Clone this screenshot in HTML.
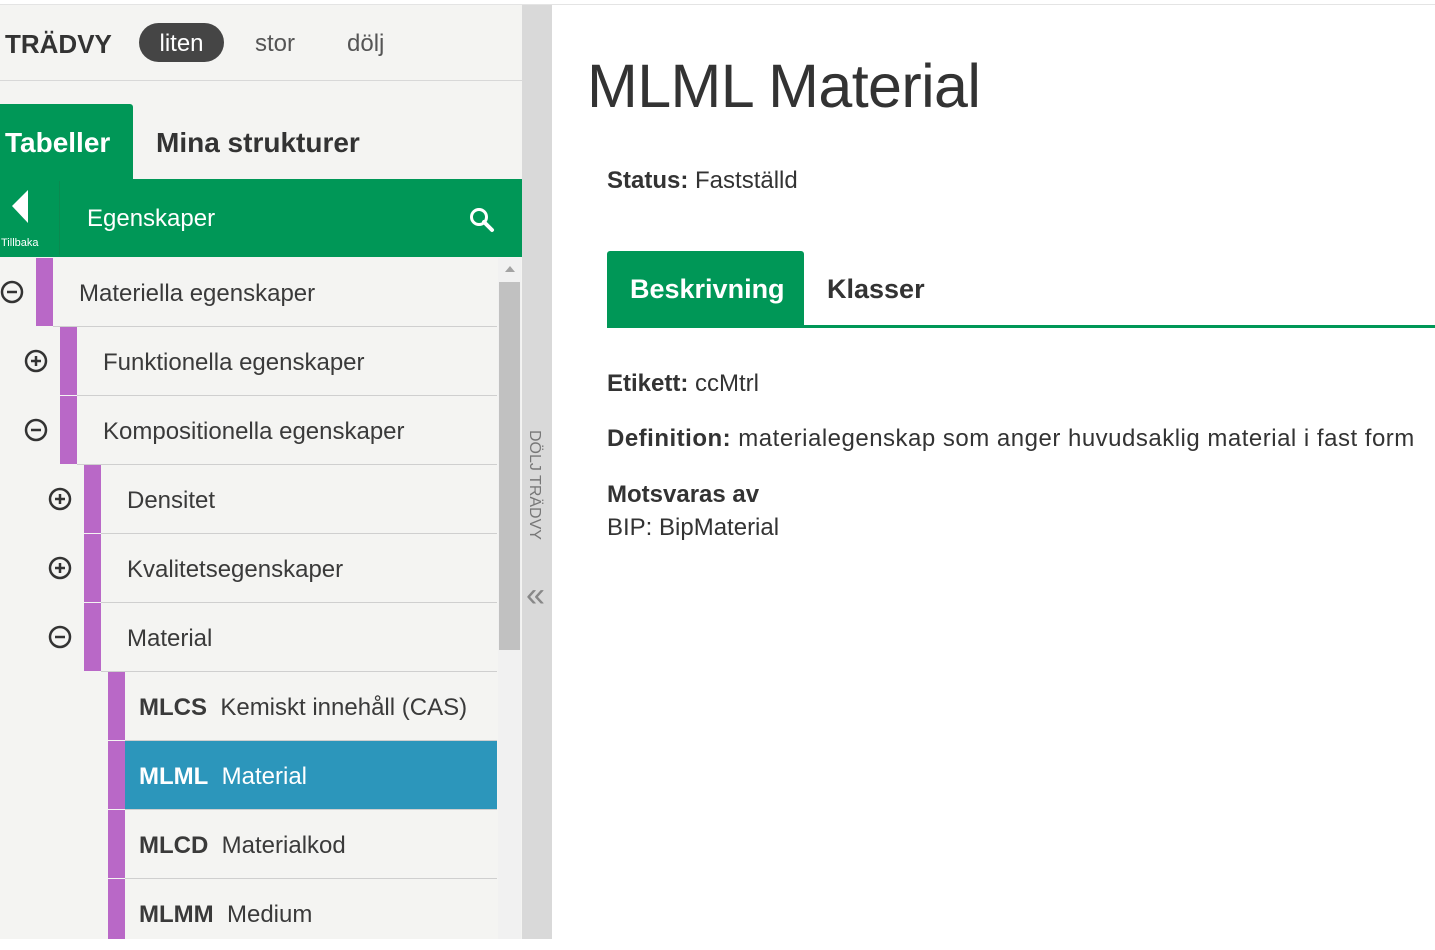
<!DOCTYPE html>
<html><head><meta charset="utf-8"><style>
*{margin:0;padding:0;box-sizing:border-box}
body{width:1435px;height:939px;overflow:hidden;background:#fff;font-family:"Liberation Sans",sans-serif;color:#333;position:relative}
.a{position:absolute;white-space:nowrap}
#side{position:absolute;left:0;top:5px;width:522px;height:934px;background:#f4f4f2}
.bar{position:absolute;width:17px;background:#b968c7}
.line{position:absolute;height:1px;background:#cfcfcf}
.t{position:absolute;font-size:24px;color:#3a3a3a;line-height:71px}
.ic{position:absolute;width:24px;height:24px}
</style></head><body>
<div class="a" style="left:0;top:4px;width:1435px;height:1px;background:#e4e4e4"></div>
<div id="side"></div>
<div class="a" style="left:0;top:80px;width:522px;height:1px;background:#d8d8d8"></div>
<div class="a" style="left:5px;top:29px;font-size:26px;font-weight:bold;color:#333">TRÄDVY</div>
<div class="a" style="left:139px;top:23px;width:85px;height:39px;border-radius:20px;background:#454545;color:#fff;font-size:24px;text-align:center;line-height:41px">liten</div>
<div class="a" style="left:255px;top:30px;font-size:24px;color:#555">stor</div>
<div class="a" style="left:347px;top:30px;font-size:24px;color:#555">dölj</div>
<div class="a" style="left:0;top:104px;width:133px;height:76px;background:#009757;border-radius:0 3px 0 0"></div>
<div class="a" style="left:5px;top:127px;font-size:28px;font-weight:bold;color:#fff">Tabeller</div>
<div class="a" style="left:156px;top:127px;font-size:28px;font-weight:bold;color:#333">Mina strukturer</div>
<div class="a" style="left:0;top:179px;width:522px;height:78px;background:#009757"></div>
<div class="a" style="left:59px;top:181px;width:1px;height:74px;background:#0a8a50"></div>
<svg class="a" style="left:10px;top:190px" width="20" height="33"><polygon points="18,0 18,33 2,16" fill="#fff"/></svg>
<div class="a" style="left:1px;top:237px;font-size:11px;color:#fff">Tillbaka</div>
<div class="a" style="left:87px;top:205px;font-size:24px;color:#fff">Egenskaper</div>
<svg class="a" style="left:468px;top:206px" width="28" height="28"><circle cx="11" cy="11" r="7.5" fill="none" stroke="#fff" stroke-width="3"/><line x1="16" y1="16" x2="24" y2="24" stroke="#fff" stroke-width="4" stroke-linecap="round"/></svg>
<div class="a" style="left:498px;top:258px;width:23px;height:681px;background:#f1f1f1"></div>
<svg class="a" style="left:504px;top:265px" width="12" height="8"><polygon points="6,1 11,7 1,7" fill="#a3a3a3"/></svg>
<div class="a" style="left:499px;top:282px;width:21px;height:368px;background:#c1c1c1"></div>
<div class="a" style="left:522px;top:5px;width:30px;height:934px;background:#d9d9d9"></div>
<div class="a" style="left:525px;top:430px;font-size:16px;color:#777;writing-mode:vertical-rl">DÖLJ TRÄDVY</div>
<div class="a" style="left:526px;top:578px;font-size:34px;color:#888;line-height:34px">«</div>

<div class="bar" style="left:36px;top:258px;height:68px"></div>
<div class="line" style="left:53px;top:326px;width:444px"></div>
<div class="t" style="left:79px;top:258px">Materiella egenskaper</div>
<svg class="ic" style="left:0;top:280px"><circle cx="12" cy="12" r="10" fill="none" stroke="#333" stroke-width="2.5"/><line x1="7" y1="12" x2="17" y2="12" stroke="#333" stroke-width="2.5"/></svg>

<div class="bar" style="left:60px;top:327px;height:68px"></div>
<div class="line" style="left:77px;top:395px;width:420px"></div>
<div class="t" style="left:103px;top:327px">Funktionella egenskaper</div>
<svg class="ic" style="left:24px;top:349px"><circle cx="12" cy="12" r="10" fill="none" stroke="#333" stroke-width="2.5"/><line x1="7" y1="12" x2="17" y2="12" stroke="#333" stroke-width="2.5"/><line x1="12" y1="7" x2="12" y2="17" stroke="#333" stroke-width="2.5"/></svg>

<div class="bar" style="left:60px;top:396px;height:68px"></div>
<div class="line" style="left:77px;top:464px;width:420px"></div>
<div class="t" style="left:103px;top:396px">Kompositionella egenskaper</div>
<svg class="ic" style="left:24px;top:418px"><circle cx="12" cy="12" r="10" fill="none" stroke="#333" stroke-width="2.5"/><line x1="7" y1="12" x2="17" y2="12" stroke="#333" stroke-width="2.5"/></svg>

<div class="bar" style="left:84px;top:465px;height:68px"></div>
<div class="line" style="left:101px;top:533px;width:396px"></div>
<div class="t" style="left:127px;top:465px">Densitet</div>
<svg class="ic" style="left:48px;top:487px"><circle cx="12" cy="12" r="10" fill="none" stroke="#333" stroke-width="2.5"/><line x1="7" y1="12" x2="17" y2="12" stroke="#333" stroke-width="2.5"/><line x1="12" y1="7" x2="12" y2="17" stroke="#333" stroke-width="2.5"/></svg>

<div class="bar" style="left:84px;top:534px;height:68px"></div>
<div class="line" style="left:101px;top:602px;width:396px"></div>
<div class="t" style="left:127px;top:534px">Kvalitetsegenskaper</div>
<svg class="ic" style="left:48px;top:556px"><circle cx="12" cy="12" r="10" fill="none" stroke="#333" stroke-width="2.5"/><line x1="7" y1="12" x2="17" y2="12" stroke="#333" stroke-width="2.5"/><line x1="12" y1="7" x2="12" y2="17" stroke="#333" stroke-width="2.5"/></svg>

<div class="bar" style="left:84px;top:603px;height:68px"></div>
<div class="line" style="left:101px;top:671px;width:396px"></div>
<div class="t" style="left:127px;top:603px">Material</div>
<svg class="ic" style="left:48px;top:625px"><circle cx="12" cy="12" r="10" fill="none" stroke="#333" stroke-width="2.5"/><line x1="7" y1="12" x2="17" y2="12" stroke="#333" stroke-width="2.5"/></svg>

<div class="bar" style="left:108px;top:672px;height:68px"></div>
<div class="line" style="left:125px;top:740px;width:372px"></div>
<div class="t" style="left:139px;top:672px"><b>MLCS</b>&nbsp; Kemiskt innehåll (CAS)</div>

<div class="a" style="left:125px;top:741px;width:372px;height:68px;background:#2c96bb"></div>
<div class="bar" style="left:108px;top:741px;height:68px"></div>
<div class="line" style="left:125px;top:809px;width:372px"></div>
<div class="t" style="left:139px;top:741px;color:#fff"><b>MLML</b>&nbsp; Material</div>

<div class="bar" style="left:108px;top:810px;height:68px"></div>
<div class="line" style="left:125px;top:878px;width:372px"></div>
<div class="t" style="left:139px;top:810px"><b>MLCD</b>&nbsp; Materialkod</div>

<div class="bar" style="left:108px;top:879px;height:60px"></div>
<div class="t" style="left:139px;top:879px"><b>MLMM</b>&nbsp; Medium</div>

<div class="a" style="left:587px;top:51px;font-size:61px;color:#333;letter-spacing:-0.6px">MLML Material</div>
<div class="a" style="left:607px;top:167px;font-size:24px;color:#333"><b>Status:</b> Fastställd</div>
<div class="a" style="left:607px;top:251px;width:197px;height:77px;background:#009757;border-radius:3px 3px 0 0"></div>
<div class="a" style="left:607px;top:325px;width:828px;height:3px;background:#009757"></div>
<div class="a" style="left:630px;top:274px;font-size:27px;font-weight:bold;color:#fff">Beskrivning</div>
<div class="a" style="left:827px;top:274px;font-size:27px;font-weight:bold;color:#333">Klasser</div>
<div class="a" style="left:607px;top:370px;font-size:24px"><b>Etikett:</b> ccMtrl</div>
<div class="a" style="left:607px;top:425px;font-size:24px;letter-spacing:0.5px"><b>Definition:</b> materialegenskap som anger huvudsaklig material i fast form</div>
<div class="a" style="left:607px;top:481px;font-size:24px;font-weight:bold">Motsvaras av</div>
<div class="a" style="left:607px;top:514px;font-size:24px">BIP: BipMaterial</div>
</body></html>
